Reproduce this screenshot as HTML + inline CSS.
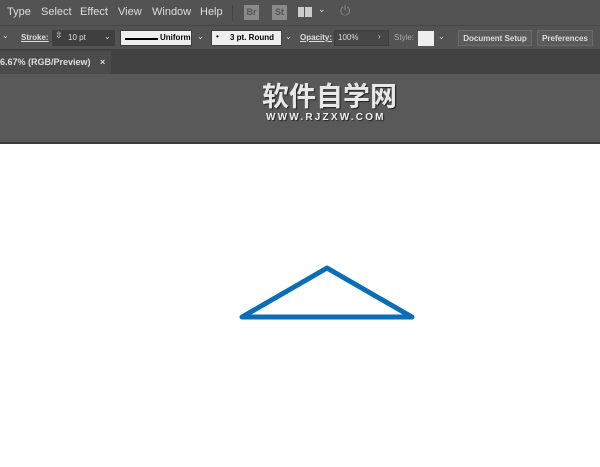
<!DOCTYPE html>
<html><head><meta charset="utf-8"><style>
*{margin:0;padding:0;box-sizing:border-box}
body{width:600px;height:467px;overflow:hidden;background:#fff;font-family:"Liberation Sans",sans-serif;position:relative}
.a{position:absolute}
.menu{left:0;top:0;width:600px;height:25px;background:#535353;color:#ddd;font-size:11px}
.menu span{position:absolute;top:6px}
.ctrl{left:0;top:25px;width:600px;height:25px;background:#535353;border-top:1px solid #474747;border-bottom:1px solid #3d3d3d;font-size:8px;color:#ddd}
.box{position:absolute;top:4px;height:16px;border:1px solid #3e3e3e}
.tabs{left:0;top:50px;width:600px;height:24px;background:#424242}
.tab{left:0;top:1px;width:111px;height:23px;background:#4b4b4b;color:#ddd;font-size:9px;font-weight:bold;padding:6px 0 0 0}
.grey{left:0;top:74px;width:600px;height:70px;background:#595959;border-bottom:2px solid #3a3a3a}
</style></head><body>
<div class="a menu">
<span style="left:7px">Type</span><span style="left:41px">Select</span><span style="left:80px">Effect</span><span style="left:118px">View</span><span style="left:152px">Window</span><span style="left:200px">Help</span>
<div class="a" style="left:232px;top:5px;width:1px;height:16px;background:#444"></div>
<div class="a" style="left:244px;top:5px;width:15px;height:15px;background:#8a8a8a;color:#555;font-size:9px;font-weight:bold;text-align:center;line-height:15px">Br</div>
<div class="a" style="left:272px;top:5px;width:15px;height:15px;background:#8a8a8a;color:#555;font-size:9px;font-weight:bold;text-align:center;line-height:15px">St</div>
<div class="a" style="left:298px;top:7px;width:14px;height:10px;background:#ccc;border-left:6px solid #ccc;box-shadow:inset 1px 0 #535353"></div>
<span style="left:318px;top:4px;font-size:9px">⌄</span>
<span style="left:340px;top:3px;color:#888;font-size:13px">⏻</span>
</div>
<div class="a ctrl">
<span class="a" style="left:2px;top:5px">⌄</span>
<span class="a" style="left:21px;top:7px;font-weight:bold;text-decoration:underline">Stroke:</span>
<div class="box" style="left:52px;width:63px;background:#3f3f3f;left:52px"></div>
<span class="a" style="left:55px;top:4px;font-size:9px">⇳</span>
<span class="a" style="left:68px;top:7px">10 pt</span>
<span class="a" style="left:104px;top:6px">⌄</span>
<div class="box" style="left:120px;width:72px;background:#eee"></div>
<div class="a" style="left:125px;top:12px;width:33px;height:2px;background:#000"></div>
<span class="a" style="left:160px;top:7px;color:#000;font-weight:bold">Uniform</span>
<span class="a" style="left:197px;top:6px">⌄</span>
<div class="box" style="left:211px;width:71px;background:#eee"></div>
<span class="a" style="left:216px;top:6px;color:#000">•</span>
<span class="a" style="left:230px;top:7px;color:#000;font-weight:bold">3 pt. Round</span>
<span class="a" style="left:285px;top:6px">⌄</span>
<span class="a" style="left:300px;top:7px;font-weight:bold;text-decoration:underline">Opacity:</span>
<div class="box" style="left:334px;width:55px;background:#464646"></div>
<span class="a" style="left:338px;top:7px">100%</span>
<span class="a" style="left:378px;top:6px">›</span>
<span class="a" style="left:394px;top:7px;color:#aaa">Style:</span>
<div class="a" style="left:418px;top:5px;width:16px;height:15px;background:#eee"></div>
<span class="a" style="left:438px;top:6px">⌄</span>
<div class="box" style="left:458px;width:74px;background:#5a5a5a;border-color:#6a6a6a;text-align:center;padding-top:3px;font-weight:bold">Document Setup</div>
<div class="box" style="left:537px;width:56px;background:#5a5a5a;border-color:#6a6a6a;text-align:center;padding-top:3px;font-weight:bold">Preferences</div>
</div>
<div class="a tabs"><div class="a tab">6.67% (RGB/Preview)<span style="position:absolute;left:100px">×</span></div></div>
<div class="a grey">
<div class="a" style="left:262px;top:7px;font-family:'Noto Sans CJK SC',sans-serif;font-weight:bold;font-size:27px;color:#e8e8e8;line-height:28px;text-shadow:1px 1px 1px #222">软件自学网</div>
<div class="a" style="left:266px;top:38px;font-size:10px;font-weight:bold;color:#eee;letter-spacing:2.2px;text-shadow:1px 1px 1px #222">WWW.RJZXW.COM</div>
</div>
<svg class="a" style="left:0;top:0" width="600" height="467"><polygon points="242,317 327,268 412,317" fill="none" stroke="#0a6db8" stroke-width="5" stroke-linejoin="round"/></svg>
</body></html>
